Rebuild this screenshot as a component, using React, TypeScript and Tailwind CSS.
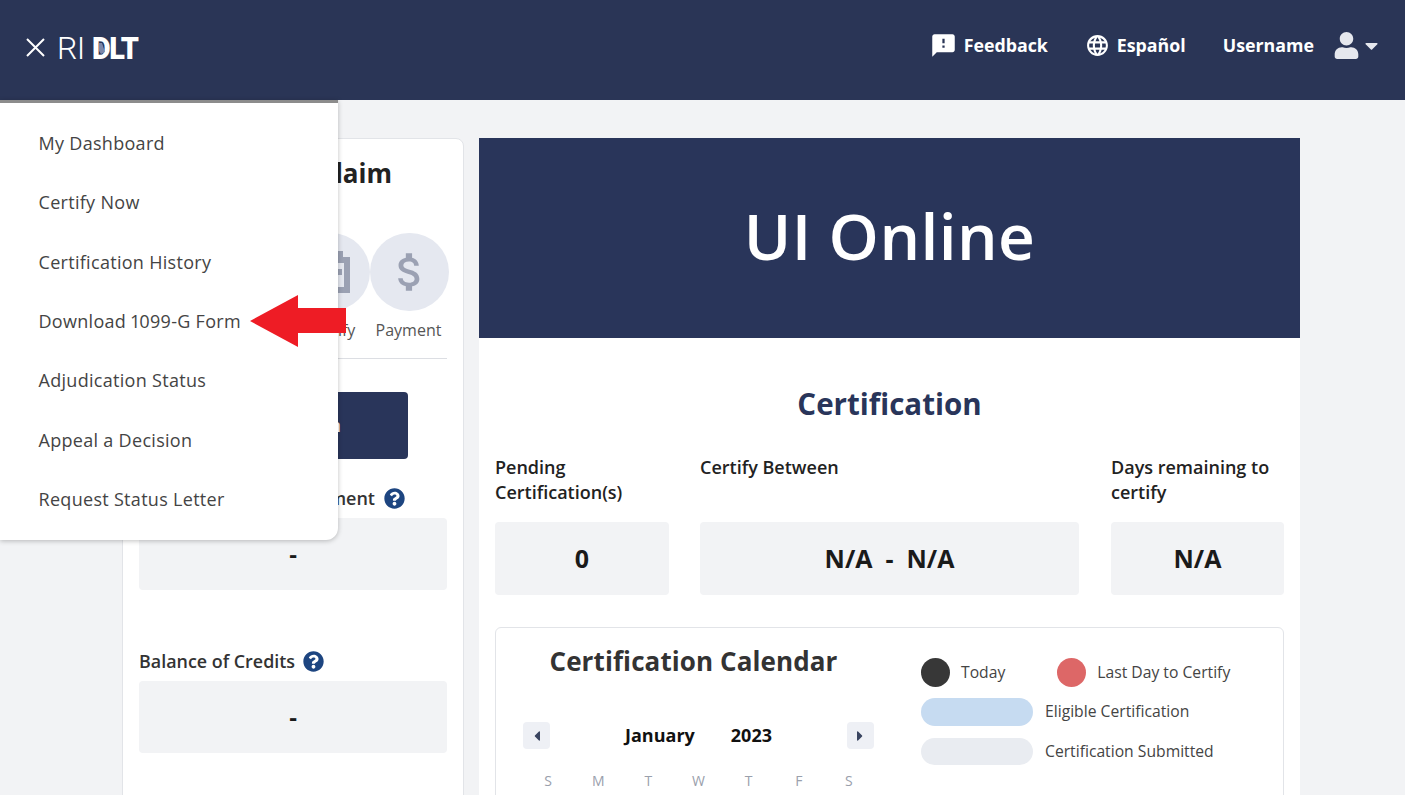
import React from "react";
import { MdFeedback, MdLanguage, MdAttachMoney } from "react-icons/md";
import { FaUser, FaCaretDown, FaCaretLeft, FaCaretRight, FaQuestionCircle } from "react-icons/fa";

const menu = [
  "My Dashboard",
  "Certify Now",
  "Certification History",
  "Download 1099-G Form",
  "Adjudication Status",
  "Appeal a Decision",
  "Request Status Letter",
];

function Help() {
  return <FaQuestionCircle className="text-[#1d4580] w-[21px] h-[21px] shrink-0" />;
}

function StatBox({ label, value, className }: { label: string; value: string; className: string }) {
  return (
    <div className={`flex flex-col ${className}`}>
      <div className="h-[68px] pt-[1px] text-[18px] leading-[25px] font-semibold text-[#222]">{label}</div>
      <div className="h-[73px] rounded bg-[#f2f3f5] flex items-center justify-center text-[25px] font-bold text-[#1a1a1a] whitespace-pre">
        {value}
      </div>
    </div>
  );
}

export default function App() {
  return (
    <div className="relative h-[795px] w-[1405px] overflow-hidden bg-[#f2f3f5] font-['Open_Sans',sans-serif]">
      <header className="h-[100px] bg-[#2a3556] flex items-center pl-[26px] pr-[23px] text-white">
        <svg className="mr-[12px] -mt-[5px]" width="19" height="19" viewBox="0 0 19 19" fill="none">
          <path d="M1 1 L18 18 M18 1 L1 18" stroke="#ffffff" strokeWidth="2" />
        </svg>
        <div className="relative flex items-baseline -mt-[5px] leading-none">
          <span className="font-['Roboto',sans-serif] font-light text-[32px] tracking-[-0.5px]">RI</span>
          <span className="ml-[7px] origin-left scale-x-[0.9] font-['Roboto',sans-serif] font-black text-[32px] tracking-[-1.5px]">DLT</span>
          <svg className="absolute left-[41px] top-[10px]" width="8" height="14" viewBox="0 0 8 14">
            <path d="M1 1 L4 1 L7 10 L3 12 L1 9 Z" fill="#7d88aa" />
          </svg>
        </div>
        <div className="ml-auto flex items-center -mt-[9px] text-[17.8px] font-bold">
          <MdFeedback className="w-[27px] h-[27px] mr-[7px]" />
          <span>Feedback</span>
          <MdLanguage className="w-[25px] h-[25px] ml-[37px] mr-[7px]" />
          <span>Español</span>
          <span className="ml-[37px]">Username</span>
          <FaUser className="w-[27px] h-[27px] ml-[19px] text-[#e6e8ee]" />
          <FaCaretDown className="w-[21px] h-[21px] ml-[1px] text-[#e6e8ee]" />
        </div>
      </header>

      <main className="flex items-start gap-[15px] pl-[122px] pt-[38px]">
        <section className="w-[342px] h-[700px] shrink-0 bg-white border border-[#e2e4e8] rounded-lg px-[16px]">
          <h2 className="mt-[17px] pr-[55px] text-right text-[26px] leading-[34px] font-bold text-[#222]">Current Claim</h2>
          <div className="mt-[43px] flex justify-end">
            <div className="w-[78px] flex flex-col items-center">
              <div className="w-[78px] h-[78px] rounded-full bg-[#e5e8f0] flex items-center justify-center">
                <svg width="30" height="42" viewBox="0 0 30 42" fill="none" className="ml-[8px]">
                  <path d="M3 9 H27 V39 H3 Z" stroke="#9ba1b3" strokeWidth="6" />
                  <path d="M10 0 V9 M20 0 V9" stroke="#9ba1b3" strokeWidth="6" />
                  <rect x="17" y="18" width="5" height="6" fill="#9ba1b3" />
                </svg>
              </div>
              <div className="mt-[8px] text-[16px] leading-[22px] text-[#555]">Certify</div>
            </div>
            <div className="w-[79px] flex flex-col items-center mr-[-2px]">
              <div className="w-[79px] h-[78px] rounded-full bg-[#e5e8f0] flex items-center justify-center">
                <MdAttachMoney className="w-[50px] h-[50px] text-[#9ba1b3]" />
              </div>
              <div className="mt-[8px] mr-[2px] text-[16px] leading-[22px] text-[#555]">Payment</div>
            </div>
          </div>
          <div className="mt-[17px] border-t border-[#dcdee3]" />
          <div className="mt-[33px] h-[67px] mr-[39px] pr-[67px] rounded bg-[#29355a] flex items-center justify-end text-white text-[18px] font-semibold whitespace-nowrap">
            Certification
          </div>
          <div className="mt-[27px] h-[24px] flex items-center text-[18px] font-semibold text-[#333] justify-end pr-[42px] gap-[9px]">
            <span>Last Payment</span>
            <Help />
          </div>
          <div className="mt-[8px] h-[72px] rounded bg-[#f2f3f5] flex items-center justify-center text-[24px] font-bold text-[#1a1a1a]">-</div>
          <div className="mt-[59px] h-[24px] flex items-center gap-[8px] text-[17.9px] font-semibold text-[#333]">
            <span>Balance of Credits</span>
            <Help />
          </div>
          <div className="mt-[8px] h-[72px] rounded bg-[#f2f3f5] flex items-center justify-center text-[24px] font-bold text-[#1a1a1a]">-</div>
        </section>

        <section className="w-[821px] shrink-0 bg-white">
          <div className="h-[200px] pb-[4px] bg-[#29355a] flex items-center justify-center text-white text-[64px] font-[550] tracking-[0.4px]">
            UI Online
          </div>
          <div className="px-[16px]">
            <h2 className="mt-[46px] text-center text-[29.5px] leading-[40px] font-bold text-[#29355a]">Certification</h2>
            <div className="mt-[30px] flex gap-[31px]">
              <StatBox className="w-[174px]" label="Pending Certification(s)" value="0" />
              <StatBox className="flex-1" label="Certify Between" value="N/A  -  N/A" />
              <StatBox className="w-[173px] ml-[1px]" label="Days remaining to certify" value="N/A" />
            </div>
            <div className="mt-[32px] h-[300px] border border-[#e2e4e8] rounded-md flex">
              <div className="w-[395px] shrink-0">
                <h3 className="mt-[15px] text-center text-[26px] leading-[36px] font-bold text-[#333] tracking-[0.1px]">
                  Certification Calendar
                </h3>
                <div className="mt-[43px] ml-[27px] w-[351px] flex items-center justify-between">
                  <div className="w-[27px] h-[27px] rounded bg-[#eef0f5] flex items-center justify-center">
                    <FaCaretLeft className="w-[16px] h-[16px] text-[#3a4560]" />
                  </div>
                  <div className="flex gap-[36px] text-[18px] font-bold text-[#111]">
                    <span>January</span>
                    <span>2023</span>
                  </div>
                  <div className="w-[27px] h-[27px] rounded bg-[#eef0f5] flex items-center justify-center">
                    <FaCaretRight className="w-[16px] h-[16px] text-[#3a4560]" />
                  </div>
                </div>
                <div className="mt-[21px] ml-[27px] w-[351px] grid grid-cols-7 text-center text-[14px] text-[#9aa0ac]">
                  {["S", "M", "T", "W", "T", "F", "S"].map((d, i) => (
                    <span key={i}>{d}</span>
                  ))}
                </div>
              </div>
              <div className="pl-[30px] pt-[30px] text-[15.7px] text-[#444] flex flex-col gap-[11px]">
                <div className="flex items-center h-[29px]">
                  <span className="w-[29px] h-[29px] rounded-full bg-[#373737]" />
                  <span className="ml-[11px]">Today</span>
                  <span className="ml-[52px] w-[29px] h-[29px] rounded-full bg-[#dd6767]" />
                  <span className="ml-[11px]">Last Day to Certify</span>
                </div>
                <div className="flex items-center h-[28px]">
                  <span className="w-[112px] h-[28px] rounded-full bg-[#c6dbf1]" />
                  <span className="ml-[12px]">Eligible Certification</span>
                </div>
                <div className="flex items-center h-[27px] mt-[1px]">
                  <span className="w-[112px] h-[27px] rounded-full bg-[#e9ecf1]" />
                  <span className="ml-[12px]">Certification Submitted</span>
                </div>
              </div>
            </div>
          </div>
        </section>
      </main>

      <nav className="absolute left-0 top-[100px] w-[338px] h-[440px] bg-white border-t-[3px] border-[#8c8c8c] rounded-br-xl shadow-[0_1px_5px_rgba(0,0,0,0.25)] pt-[10.8px] pl-[38.5px]">
        <ul>
          {menu.map((m) => (
            <li key={m} className="h-[59.35px] flex items-center text-[18px] text-[#444] tracking-[0.3px] proportional-nums">
              {m}
            </li>
          ))}
        </ul>
      </nav>

      <svg className="absolute left-[250px] top-[295px]" width="96" height="52" viewBox="0 0 96 52">
        <path d="M0 26 L48 0 V13 H96 V38 H48 V52 Z" fill="#ee1c25" />
      </svg>
    </div>
  );
}
